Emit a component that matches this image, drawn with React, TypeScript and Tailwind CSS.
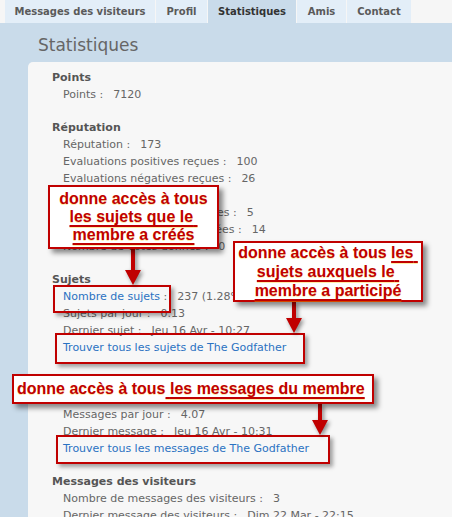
import React from 'react';

type Row = { label: string; value?: string; link?: boolean };
type Section = { title: string; rows: Row[] };

const tabs = [
  { label: 'Messages des visiteurs', width: 'w-[150px]' },
  { label: 'Profil', width: 'w-[51px]' },
  { label: 'Statistiques', width: 'w-[88px]', active: true },
  { label: 'Amis', width: 'w-[49px]' },
  { label: 'Contact', width: 'w-[64px]' },
];

const sections: Section[] = [
  { title: 'Points', rows: [{ label: 'Points', value: '7120' }] },
  {
    title: 'Réputation',
    rows: [
      { label: 'Réputation', value: '173' },
      { label: 'Evaluations positives reçues', value: '100' },
      { label: 'Evaluations négatives reçues', value: '26' },
      { label: 'Votes donnés', value: '19' },
      { label: 'Evaluations positives données', value: '5' },
      { label: 'Evaluations négatives données', value: '14' },
      { label: 'Nombre de votes donnés', value: '0' },
    ],
  },
  {
    title: 'Sujets',
    rows: [
      { label: 'Nombre de sujets', value: '237 (1.28% du total)', link: true },
      { label: 'Sujets par jour', value: '0.13' },
      { label: 'Dernier sujet', value: 'Jeu 16 Avr - 10:27' },
      { label: 'Trouver tous les sujets de The Godfather', link: true },
    ],
  },
  {
    title: 'Messages',
    rows: [
      { label: 'Nombre de messages', value: '7120 (4.52% du total)', link: true },
      { label: 'Messages par jour', value: '4.07' },
      { label: 'Dernier message', value: 'Jeu 16 Avr - 10:31' },
      { label: 'Trouver tous les messages de The Godfather', link: true },
    ],
  },
  {
    title: 'Messages des visiteurs',
    rows: [
      { label: 'Nombre de messages des visiteurs', value: '3' },
      { label: 'Dernier message des visiteurs', value: 'Dim 22 Mar - 22:15' },
    ],
  },
];

function StatRow({ row }: { row: Row }) {
  return (
    <div className="whitespace-nowrap pl-[11px] leading-[17px]">
      {row.link ? (
        <a className="text-[#2b72c2]">{row.label}</a>
      ) : (
        <span>{row.label}</span>
      )}
      {row.value && (
        <>
          <span> :</span>
          <span className="ml-[10px]">{row.value}</span>
        </>
      )}
    </div>
  );
}

function Arrow({ className, height }: { className: string; height: number }) {
  const head = height - 15;
  return (
    <svg
      className={`absolute drop-shadow-[2px_2px_2px_rgba(0,0,0,0.45)] ${className}`}
      width="20"
      height={height}
      viewBox={`0 0 20 ${height}`}
    >
      <rect x="8" y="0" width="4" height={head + 1} fill="#c00000" />
      <polygon points={`2,${head} 18,${head} 10,${height}`} fill="#c00000" />
    </svg>
  );
}

const calloutBase =
  "absolute bg-white border-2 border-[#c00000] shadow-[4px_4px_5px_rgba(0,0,0,0.45)] font-['Liberation_Sans',Arial,sans-serif] font-bold text-[16px] text-[#c00000] whitespace-nowrap [text-shadow:0_1px_0_rgba(255,200,0,0.35)]";
const mark = 'underline decoration-2 underline-offset-[3px]';
const frame =
  'absolute border-2 border-[#c00000] shadow-[3px_3px_4px_rgba(0,0,0,0.35)]';

export default function App() {
  return (
    <div className="relative h-[517px] w-[452px] overflow-hidden bg-[#f6f6f6] font-['DejaVu_Sans',sans-serif] text-[11px] text-[#666]">
      {/* Tabs */}
      <nav className="flex h-[23px] gap-px pl-[5px]">
        {tabs.map((t) => (
          <div
            key={t.label}
            className={`${t.width} text-center text-[10px] font-bold leading-[23px] ${
              t.active ? 'bg-[#c9dbea] text-[#333]' : 'bg-[#e3eef8] text-[#5a5a5a]'
            }`}
          >
            {t.label}
          </div>
        ))}
      </nav>

      {/* Panel */}
      <div className="h-[494px] bg-[#c9dbea] pl-[28px]">
        <h2 className="mb-[7px] pl-[10px] pt-3 text-[17px] leading-5 text-[#666]">
          Statistiques
        </h2>
        <div className="h-full rounded-tl-[5px] bg-[#f7f7f7] pl-6 pt-[7px]">
          <div className="flex flex-col gap-4">
            {sections.map((s) => (
              <section key={s.title}>
                <div className="font-bold leading-[17px] text-[#555]">{s.title}</div>
                {s.rows.map((r) => (
                  <StatRow key={r.label} row={r} />
                ))}
              </section>
            ))}
          </div>
        </div>
      </div>

      {/* Highlight frames */}
      <div className={`${frame} left-[53px] top-[285px] h-[28px] w-[118px]`} />
      <div className={`${frame} left-[55px] top-[333px] h-[31px] w-[250px]`} />
      <div className={`${frame} left-[56px] top-[435px] h-[29px] w-[274px]`} />

      {/* Arrows */}
      <Arrow className="left-[123px] top-[249px]" height={36} />
      <Arrow className="left-[284px] top-[302px]" height={31} />
      <Arrow className="left-[310px] top-[404px]" height={31} />

      {/* Callouts */}
      <div className={`${calloutBase} left-[48px] top-[185px] h-[64px] w-[171px] pt-[3px] text-center leading-[18px]`}>
        <div>donne accès à tous</div>
        <div>
          <span className={mark}>les sujets que le{'\u00a0'}</span>
        </div>
        <div>
          <span className={mark}>membre a créés</span>
        </div>
      </div>

      <div className={`${calloutBase} left-[233px] top-[241px] h-[61px] w-[190px] text-center leading-[19px]`}>
        <div>
          donne accès à tous <span className={mark}>les{'\u00a0'}</span>
        </div>
        <div>
          <span className={mark}>sujets auxquels le{'\u00a0'}</span>
        </div>
        <div>
          <span className={mark}>membre a participé</span>
        </div>
      </div>

      <div className={`${calloutBase} left-[12px] top-[374px] h-[30px] w-[362px] pl-[3px] leading-[26px]`}>
        donne accès à tous<span className={mark}>{'\u00a0'}les messages du membre</span>
      </div>
    </div>
  );
}
